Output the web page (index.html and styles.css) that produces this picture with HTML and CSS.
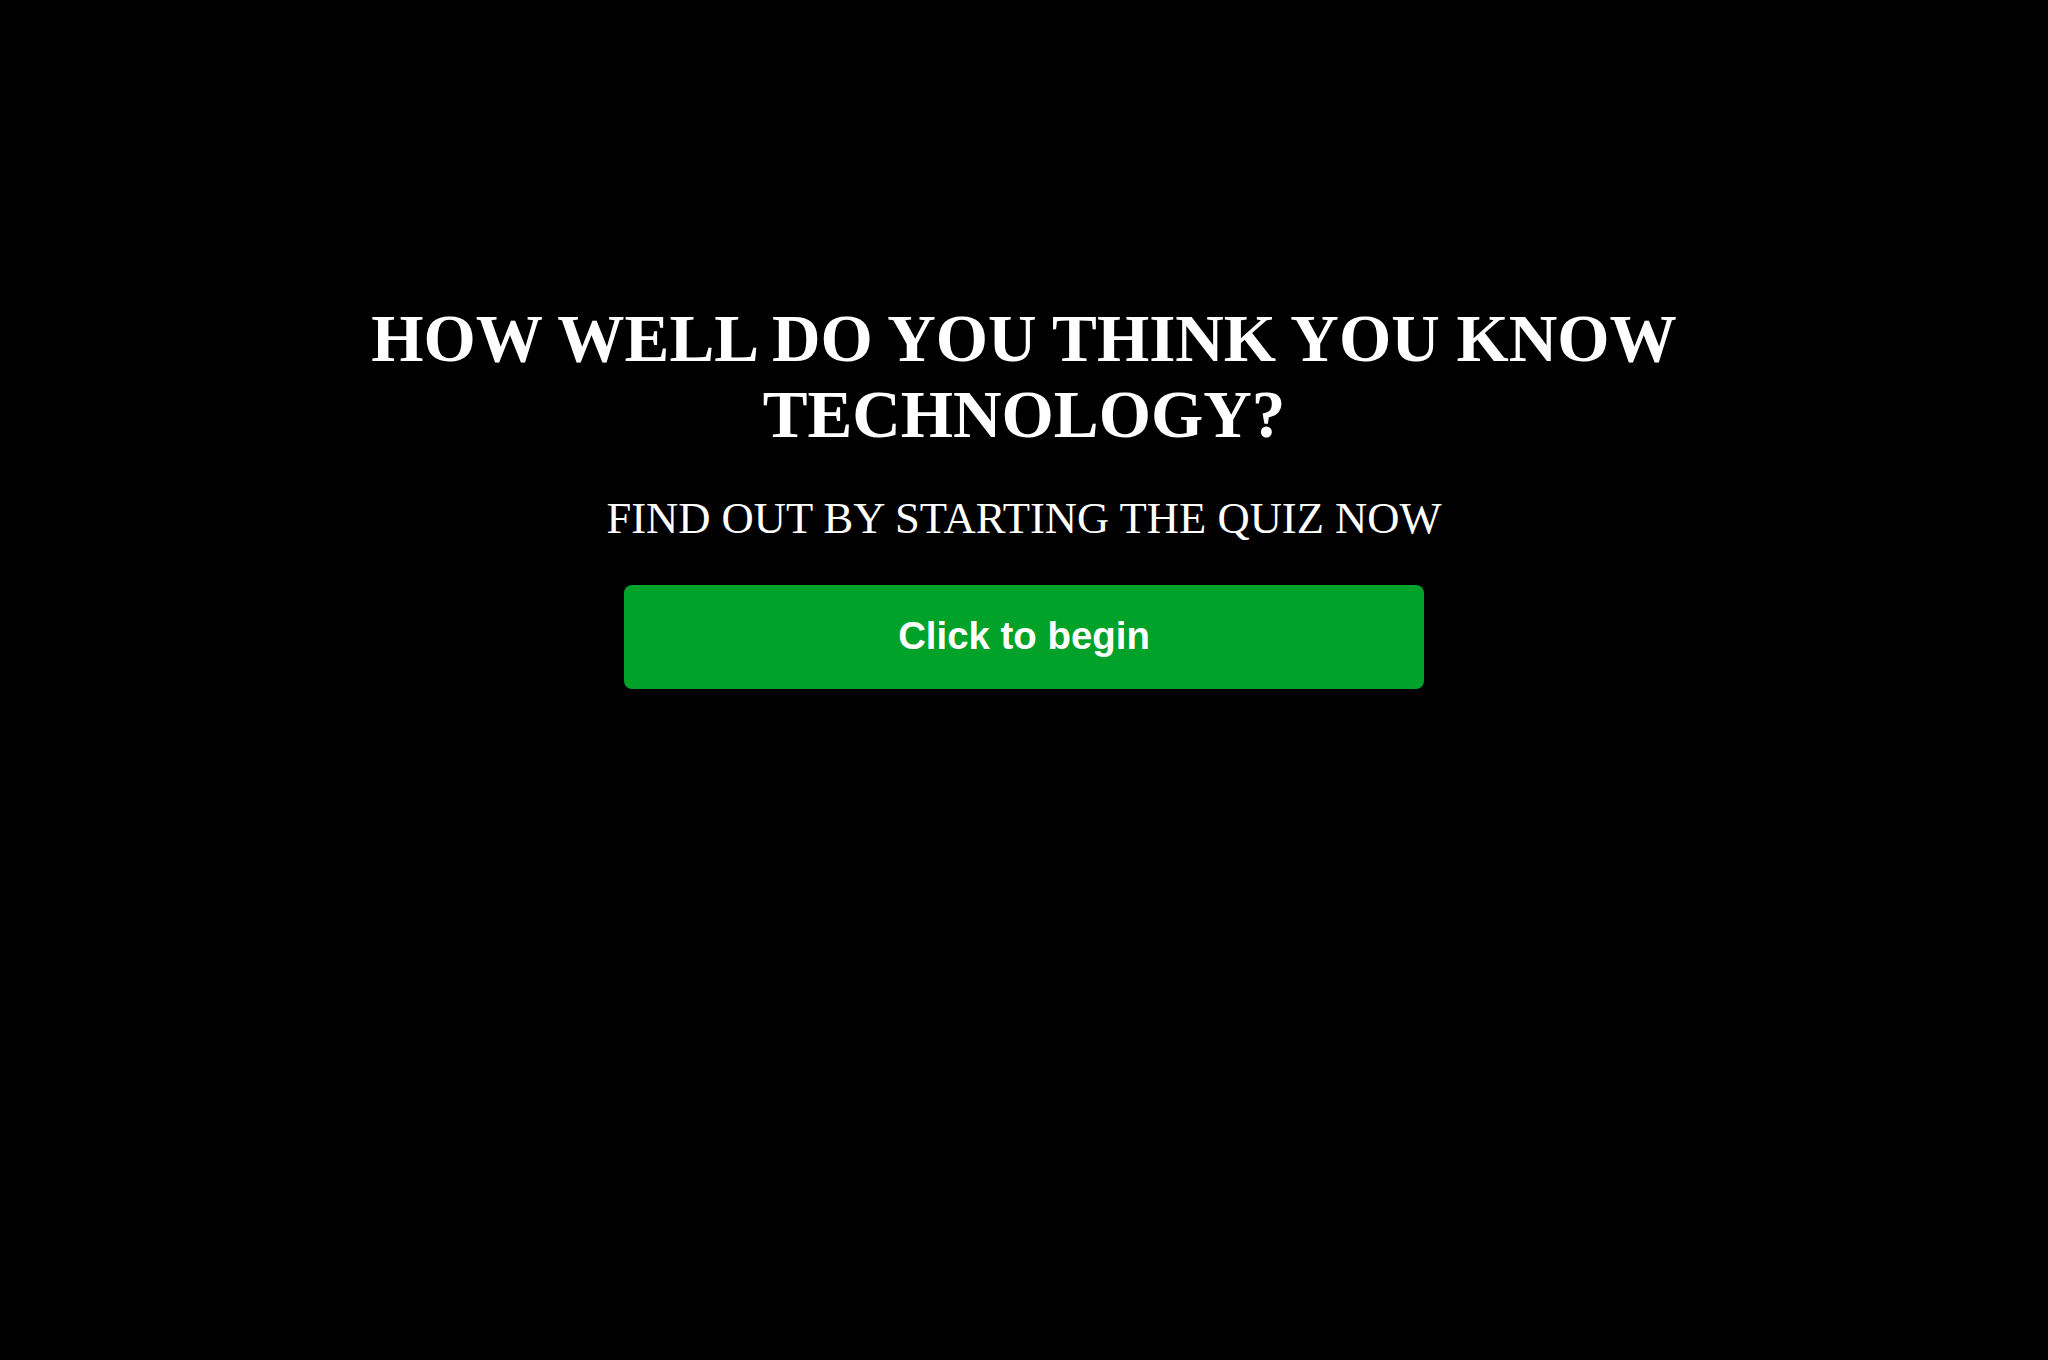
FILE: index.html
```html
<!DOCTYPE html>
<html lang="en">
<head>
<meta charset="utf-8">
<title>Technology Quiz</title>
<link rel="stylesheet" href="styles.css">
</head>
<body>
<main class="intro">
  <h1 class="intro-title">HOW WELL DO YOU THINK YOU KNOW TECHNOLOGY?</h1>
  <p class="intro-sub">FIND OUT BY STARTING THE QUIZ NOW</p>
  <button class="start-btn" type="button">Click to begin</button>
</main>
</body>
</html>
```

FILE: styles.css
```css
html, body {
  margin: 0;
  padding: 0;
  background: #000;
}

body {
  min-height: 1360px;
  font-family: "Liberation Serif", "Times New Roman", serif;
  color: #fff;
}

.intro {
  display: flex;
  flex-direction: column;
  align-items: center;
  padding-top: 300.5px;
  text-align: center;
}

.intro-title {
  margin: 0;
  width: 1400px;
  font-size: 67.2px;
  font-weight: bold;
  line-height: 76px;
}

.intro-sub {
  margin: 39px 0 0;
  font-size: 44.6px;
  line-height: normal;
}

.start-btn {
  margin-top: 41.5px;
  width: 800px;
  height: 104px;
  padding: 0 0 3px;
  border: none;
  border-radius: 8px;
  background: #00a22a;
  color: #fff;
  font-family: "Liberation Sans", Arial, sans-serif;
  font-size: 38.4px;
  font-weight: bold;
  cursor: pointer;
}
```
